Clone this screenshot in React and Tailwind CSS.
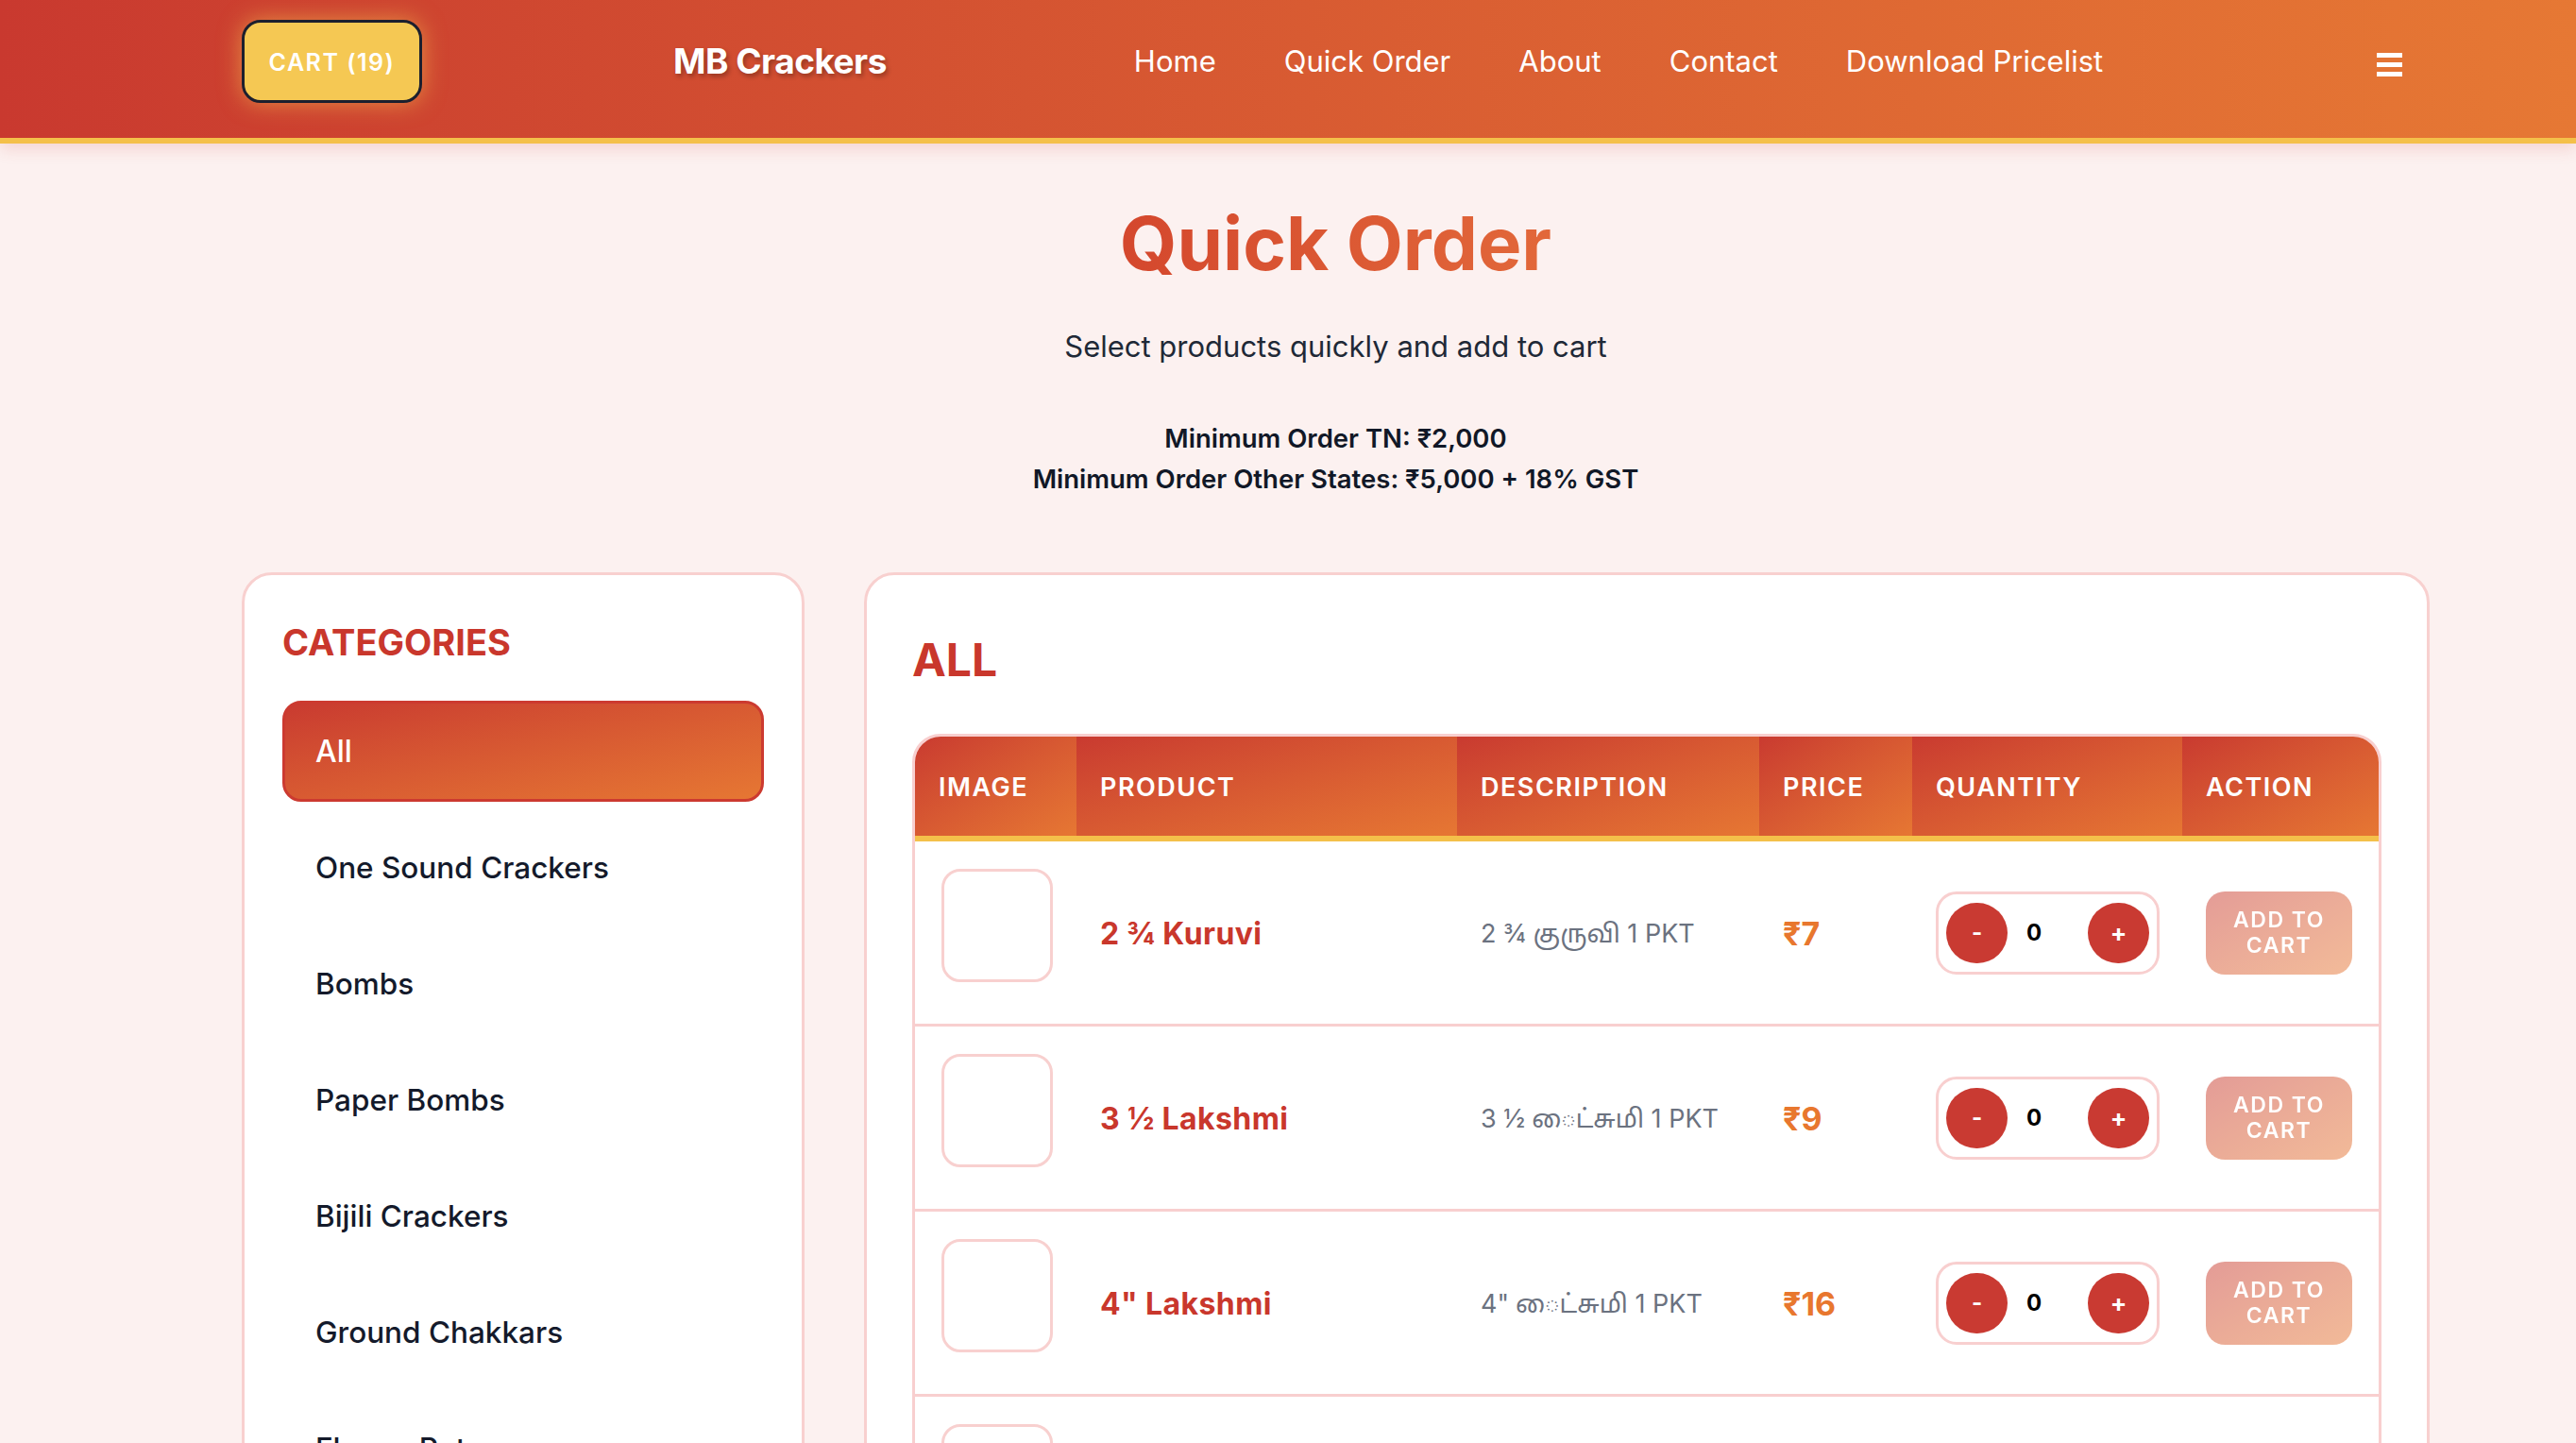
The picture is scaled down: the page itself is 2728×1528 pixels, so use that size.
import React from "react";

const categories = [
	"All",
	"One Sound Crackers",
	"Bombs",
	"Paper Bombs",
	"Bijili Crackers",
	"Ground Chakkars",
	"Flower Pots",
	"Pencils",
	"Rockets",
	"Fancy Items",
];

const products = [
	{ name: "2 ¾ Kuruvi", desc: "2 ¾ குருவி 1 PKT", price: 7 },
	{ name: "3 ½ Lakshmi", desc: "3 ½ ைட்சுமி 1 PKT", price: 9 },
	{ name: '4" Lakshmi', desc: '4" ைட்சுமி 1 PKT', price: 16 },
	{ name: '4" Gold Lakshmi', desc: '4" கோல்டு லட்சுமி 1 PKT', price: 22 },
	{ name: "Two Sound", desc: "டூ சவுண்ட் 1 PKT", price: 28 },
];

const headers = [
	{ label: "Image", w: "w-[171px]" },
	{ label: "Product", w: "w-[403px]" },
	{ label: "Description", w: "w-[320px]" },
	{ label: "Price", w: "w-[162px]" },
	{ label: "Quantity", w: "w-[286px]" },
	{ label: "Action", w: "w-[208px]" },
];

function Header() {
	return (
		<header className="flex items-center bg-linear-to-r from-[#c9392f] to-[#e67834] pt-[21px] pb-[37px] border-b-[6px] border-[#f4c04a] shadow-[0_6px_16px_rgba(201,57,47,0.15)]">
			<button className="ml-[256px] flex h-[88px] w-[191px] items-center justify-center rounded-[20px] border-[3px] border-[#1c1f2e] bg-[#f5c853] pt-[3px] text-[25px] font-semibold uppercase tracking-[1.5px] text-white shadow-[0_0_24px_rgba(245,190,80,0.6)]">
				Cart (19)
			</button>
			<div className="ml-[266px] text-[37px] font-bold tracking-[-0.5px] text-white [text-shadow:2px_3px_5px_rgba(0,0,0,0.3)]">
				MB Crackers
			</div>
			<nav className="ml-[262px] flex gap-[72px] text-[31px] font-normal text-white">
				<a>Home</a>
				<a>Quick Order</a>
				<a>About</a>
				<a>Contact</a>
				<a>Download Pricelist</a>
			</nav>
			<div className="ml-auto mr-[184px] mt-[6px] flex w-[27px] flex-col gap-[5px]">
				<span className="h-[5px] bg-white" />
				<span className="h-[5px] bg-white" />
				<span className="h-[5px] bg-white" />
			</div>
		</header>
	);
}

function Sidebar() {
	return (
		<aside className="w-[596px] shrink-0 self-start rounded-[32px] border-[3px] border-[#f8d0cf] bg-white px-[40px] pt-[49px] pb-[40px]">
			<h2 className="text-[38px] leading-[44px] font-bold text-[#c9372c]">
				CATEGORIES
			</h2>
			<ul className="mt-[40px] flex flex-col gap-[16px]">
				{categories.map((c, i) => (
					<li
						key={c}
						className={
							i === 0
								? "flex h-[107px] items-center rounded-[20px] border-[3px] border-[#cc3a30] bg-linear-to-br from-[#c93a30] to-[#e67733] pl-[32px] text-[32px] font-medium text-white"
								: "flex h-[107px] items-center rounded-[20px] border-[3px] border-transparent pl-[32px] text-[31.5px] font-medium text-[#141a2b]"
						}
					>
						{c}
					</li>
				))}
			</ul>
		</aside>
	);
}

function QtyControl() {
	return (
		<div className="flex h-[88px] w-[237px] items-center rounded-[22px] border-[3px] border-[#f8cfcf] px-[8px]">
			<button className="flex h-[64px] w-[65px] items-center justify-center rounded-full bg-[#c93a32] text-[24px] font-bold text-white">
				-
			</button>
			<span className="w-[85px] pl-[20px] text-[24px] font-bold text-black">
				0
			</span>
			<button className="flex h-[64px] w-[65px] items-center justify-center rounded-full bg-[#c93a32] text-[26px] font-bold text-white">
				+
			</button>
		</div>
	);
}

function ProductTable() {
	return (
		<div className="overflow-hidden rounded-[30px] border-[3px] border-[#f8cfcf]">
			<table className="w-full table-fixed border-collapse">
				<thead>
					<tr className="border-b-[6px] border-[#f4c04a]">
						{headers.map((h) => (
							<th
								key={h.label}
								className={`${h.w} h-[108px] bg-linear-to-br from-[#c93a30] to-[#e67733] px-[25px] pt-[3px] text-left align-middle text-[27px] font-semibold uppercase tracking-[1.5px] text-white`}
							>
								{h.label}
							</th>
						))}
					</tr>
				</thead>
				<tbody>
					{products.map((p) => (
						<tr key={p.name} className="border-b-[3px] border-[#f8cfcf]">
							<td className="px-[25px] pt-[29px] pb-[30px] align-middle">
								<div className="mb-[14px] ml-[3px] h-[120px] w-[118px] rounded-[20px] border-[3px] border-[#f8d0cf] bg-white" />
							</td>
							<td className="px-[25px] pt-[3px] align-middle text-[32px] font-bold tracking-[0.4px] text-[#c9372c]">
								{p.name}
							</td>
							<td className="px-[25px] pt-[3px] align-middle text-[27px] text-[#6b7280]">
								{p.desc}
							</td>
							<td className="px-[25px] pt-[2px] align-middle text-[34px] font-bold text-[#e8772e]">
								₹{p.price}
							</td>
							<td className="px-[25px] align-middle">
								<QtyControl />
							</td>
							<td className="px-[25px] align-middle">
								<button className="flex h-[88px] w-[155px] flex-col items-center justify-center rounded-[20px] bg-linear-to-br from-[#c93a30] to-[#e67733] text-[23px] leading-[27px] font-semibold tracking-[1.5px] text-white opacity-50">
									<span>ADD TO</span>
									<span>CART</span>
								</button>
							</td>
						</tr>
					))}
				</tbody>
			</table>
		</div>
	);
}

export default function App() {
	return (
		<div className="min-h-screen bg-[#fcf1f0] font-['Inter','Noto_Sans','Noto_Sans_Tamil',sans-serif] pb-[80px]">
			<Header />
			<main className="ml-[256px] w-[2317px]">
				<section className="pt-[58px] text-center">
					<h1 className="inline-block bg-linear-to-r from-[#d4472d] to-[#e2683a] bg-clip-text text-[78px] leading-[96px] font-bold text-transparent">
						Quick Order
					</h1>
					<p className="mt-[38px] text-[31px] leading-[45px] text-[#1f2937]">
						Select products quickly and add to cart
					</p>
					<div className="mt-[54px] text-[27.5px] leading-[43px] font-semibold text-[#111827]">
						<p>Minimum Order TN: ₹2,000</p>
						<p>Minimum Order Other States: ₹5,000 + 18% GST</p>
					</div>
				</section>
				<div className="mt-[77px] flex items-start gap-[63px]">
					<Sidebar />
					<section className="flex-1 rounded-[32px] border-[3px] border-[#f8d0cf] bg-white px-[48px] pt-[62px] pb-[48px]">
						<h2 className="text-[48px] leading-[56px] font-bold text-[#c9372c]">
							ALL
						</h2>
						<div className="mt-[50px]">
							<ProductTable />
						</div>
					</section>
				</div>
			</main>
		</div>
	);
}
